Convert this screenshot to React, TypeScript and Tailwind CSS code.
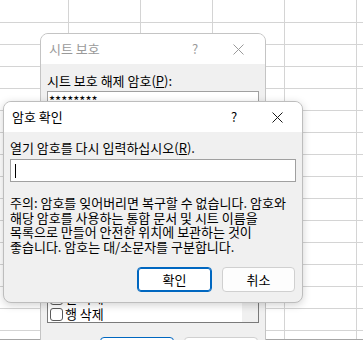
import React from "react";

const font = { fontFamily: '"Noto Sans CJK KR", "Noto Sans", sans-serif' };

function XIcon({ color = "#1a1a1a" }: { color?: string }) {
  return (
    <svg width="11" height="11" viewBox="0 0 11 11" fill="none">
      <path d="M0.5 0.5 L10.5 10.5 M10.5 0.5 L0.5 10.5" stroke={color} strokeWidth="1" />
    </svg>
  );
}

function Grid() {
  const cols = [69, 72, 72, 72, 72, 72];
  const rows = Array.from({ length: 16 }, (_, i) => (i === 0 ? 23 : 22));
  return (
    <div className="absolute inset-0 overflow-hidden bg-white">
      {rows.map((h, r) => (
        <div key={r} className="flex" style={{ height: h }}>
          {cols.map((w, c) => (
            <div key={c} className="shrink-0 border-r border-b border-[#d4d4d4]" style={{ width: w }} />
          ))}
        </div>
      ))}
      <div className="absolute left-0 right-0 top-[339px] h-px bg-[#a6a6a6]" />
    </div>
  );
}

function Checkbox() {
  return <div className="w-[13px] h-[13px] rounded-[3px] border border-[#5a5a5a] bg-white shrink-0" />;
}

function BackDialog() {
  const items = ["열 삭제", "행 삭제"];
  return (
    <div className="absolute left-[40px] top-[33px] w-[226px] h-[340px] rounded-[8px] border border-[#c4c4c4] bg-[#f0f0f0] overflow-hidden" style={font}>
      <div className="h-[30px] bg-white flex items-center pl-[8px] pr-[21px] text-[13px] text-[#9a9a9a]">
        <span className="flex-1">시트 보호</span>
        <span className="w-[14px] text-center mr-[31px] text-[13px]">?</span>
        <XIcon color="#9a9a9a" />
      </div>
      <div className="px-[6px] pt-[8px]">
        <div className="text-[13px] leading-[17px] text-black">
          시트 보호 해제 암호(<span className="underline">P</span>):
        </div>
        <div className="mt-[2px] h-[23px] border border-[#a0a0a0] bg-white px-[1px] text-[13px] leading-[18px]">********</div>
        <div className="mt-[24px] h-[185px] border border-[#7a7a7a] bg-white flex overflow-hidden">
          <div className="flex-1 flex flex-col justify-end pl-[2px]">
            {items.map((t) => (
              <div key={t} className="h-[16px] shrink-0 flex items-center gap-[2px] text-[13px] leading-[16px] text-black">
                <Checkbox />
                <span>{t}</span>
              </div>
            ))}
          </div>
          <div className="w-[16px] bg-[#f0f0f0]" />
        </div>
        <div className="mt-[14px] flex gap-[10px] pl-[53px]">
          <div className="w-[74px] h-[24px] rounded-[4px] border border-[#0067c0] bg-white" />
          <div className="w-[74px] h-[24px] rounded-[4px] border border-[#d0d0d0] bg-white" />
        </div>
      </div>
    </div>
  );
}

function FrontDialog() {
  return (
    <div className="absolute left-[3px] top-[101px] w-[300px] h-[202px] rounded-[8px] border border-[#bdbdbd] bg-[#f0f0f0] overflow-hidden shadow-[0_2px_8px_rgba(0,0,0,0.18)] flex flex-col" style={font}>
      <div className="h-[30px] bg-white flex items-center pl-[8px] pr-[19px] text-[13px] text-black shrink-0">
        <span className="flex-1">암호 확인</span>
        <span className="w-[14px] text-center mr-[31px] text-[13px]">?</span>
        <XIcon />
      </div>
      <div className="flex-1 px-[6px] pt-[8px] flex flex-col">
        <div className="text-[13px] leading-[16px] text-black whitespace-nowrap">
          열기 암호를 다시 입력하십시오(<span className="underline">R</span>).
        </div>
        <div className="mt-[3px] h-[23px] border border-[#a0a0a0] bg-white flex items-center pl-[4px]">
          <div className="w-px h-[14px] bg-black" />
        </div>
        <div className="mt-[14px] text-[13px] leading-[14.5px] text-black whitespace-nowrap">
          <div>주의: 암호를 잊어버리면 복구할 수 없습니다. 암호와</div>
          <div>해당 암호를 사용하는 통합 문서 및 시트 이름을</div>
          <div>목록으로 만들어 안전한 위치에 보관하는 것이</div>
          <div>좋습니다. 암호는 대/소문자를 구분합니다.</div>
        </div>
        <div className="mt-[13px] flex justify-end gap-[10px] pr-[1px]">
          <div className="w-[75px] h-[25px] rounded-[4px] border border-[#0067c0] shadow-[inset_0_0_0_1px_#0067c0] bg-white flex items-center justify-center text-[13px] text-black">확인</div>
          <div className="w-[73px] h-[25px] rounded-[4px] border border-[#d0d0d0] bg-[#fdfdfd] flex items-center justify-center text-[13px] text-black">취소</div>
        </div>
      </div>
    </div>
  );
}

export default function App() {
  return (
    <div className="relative w-[363px] h-[340px] overflow-hidden bg-white">
      <Grid />
      <BackDialog />
      <FrontDialog />
    </div>
  );
}
